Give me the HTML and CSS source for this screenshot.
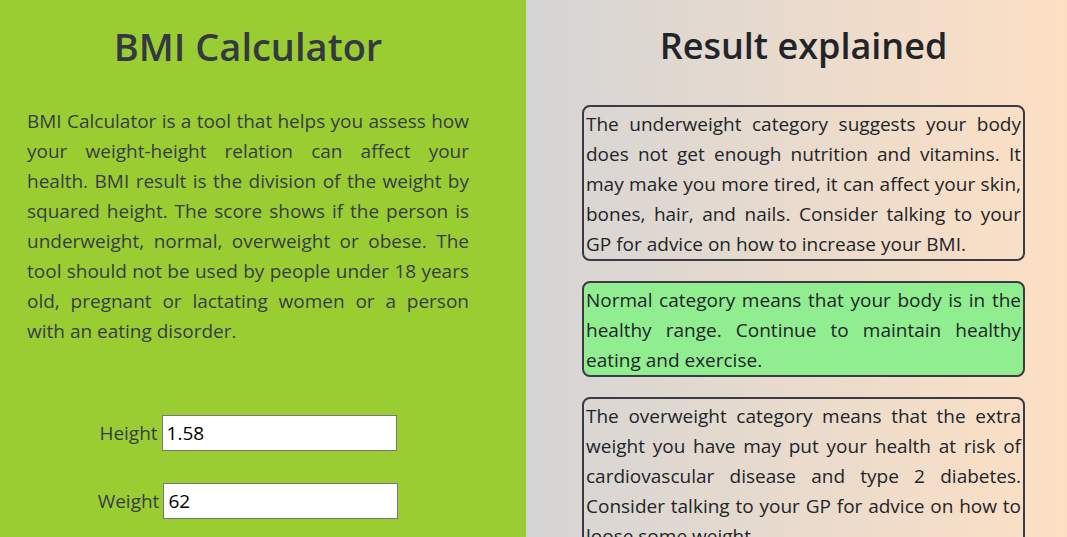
FILE: index.html
```html
<!DOCTYPE html>
<html lang="en">
<head>
<meta charset="utf-8">
<title>BMI Calculator</title>
<link rel="stylesheet" href="styles.css">
</head>
<body>
<div class="page">
  <section class="calc">
    <h1 class="calc-title">BMI Calculator</h1>
    <div class="intro">
      <p class="intro-part intro-lead">BMI Calculator is a tool that helps you assess how your weight-height relation can affect your</p>
      <p class="intro-part">health. BMI result is the division of the weight by squared height. The score shows if the person is underweight, normal, overweight or obese. The tool should not be used by people under 18 years old, pregnant or lactating women or a person with an eating disorder.</p>
    </div>
    <form class="form">
      <div class="field"><label for="h">Height</label><input id="h" type="text" value="1.58"></div>
      <div class="field"><label for="w">Weight</label><input id="w" type="text" value="62"></div>
    </form>
  </section>
  <section class="results">
    <h1 class="results-title">Result explained</h1>
    <div class="box">The underweight category suggests your body does not get enough nutrition and vitamins. It may make you more tired, it can affect your skin, bones, hair, and nails. Consider talking to your GP for advice on how to increase your BMI.</div>
    <div class="box box-normal">Normal category means that your body is in the healthy range. Continue to maintain healthy eating and exercise.</div>
    <div class="box">The overweight category means that the extra weight you have may put your health at risk of cardiovascular disease and type 2 diabetes. Consider talking to your GP for advice on how to loose some weight.</div>
  </section>
</div>
</body>
</html>
```
FILE: styles.css
```css
html, body {
  margin: 0;
  padding: 0;
  height: 100%;
  overflow: hidden;
}
body {
  font-family: "Open Sans", "Noto Sans", sans-serif;
}
.page {
  display: flex;
  height: 537px;
}
.calc {
  width: 526px;
  background: #9acd32;
  padding: 22px 57px 0 27px;
  box-sizing: border-box;
  color: #383c48;
}
.calc-title {
  margin: 0;
  text-align: center;
  font-size: 38px;
  font-weight: 600;
  line-height: 48px;
  color: #353842;
}
.intro {
  margin-top: 36px;
  font-size: 19px;
  line-height: 30px;
  text-align: justify;
}
.intro-part {
  margin: 0;
}
.intro-lead {
  text-align-last: justify;
}
.form {
  margin-top: 69px;
  display: flex;
  flex-direction: column;
  align-items: center;
  gap: 32px;
}
.field {
  display: flex;
  align-items: center;
  gap: 4px;
  font-size: 19px;
}
.field input {
  width: 235px;
  height: 36px;
  box-sizing: border-box;
  border: 1px solid #767676;
  padding: 0 4px;
  font-family: inherit;
  font-size: 19px;
  color: #000;
  background: #fff;
}
.results {
  flex: 1;
  background: linear-gradient(to right, #d5d5d5, #fde0c4);
  padding: 22px 42px 0 56px;
  box-sizing: border-box;
  color: #212529;
}
.results-title {
  margin: 0 0 35px;
  text-align: center;
  font-size: 36px;
  font-weight: 600;
  line-height: 48px;
  color: #212529;
}
.box {
  border: 2px solid #3a3b45;
  border-radius: 8px;
  padding: 2px 2px 0;
  font-size: 19px;
  line-height: 30px;
  text-align: justify;
  margin-bottom: 20px;
}
.box-normal {
  background: #90ee90;
}
```
